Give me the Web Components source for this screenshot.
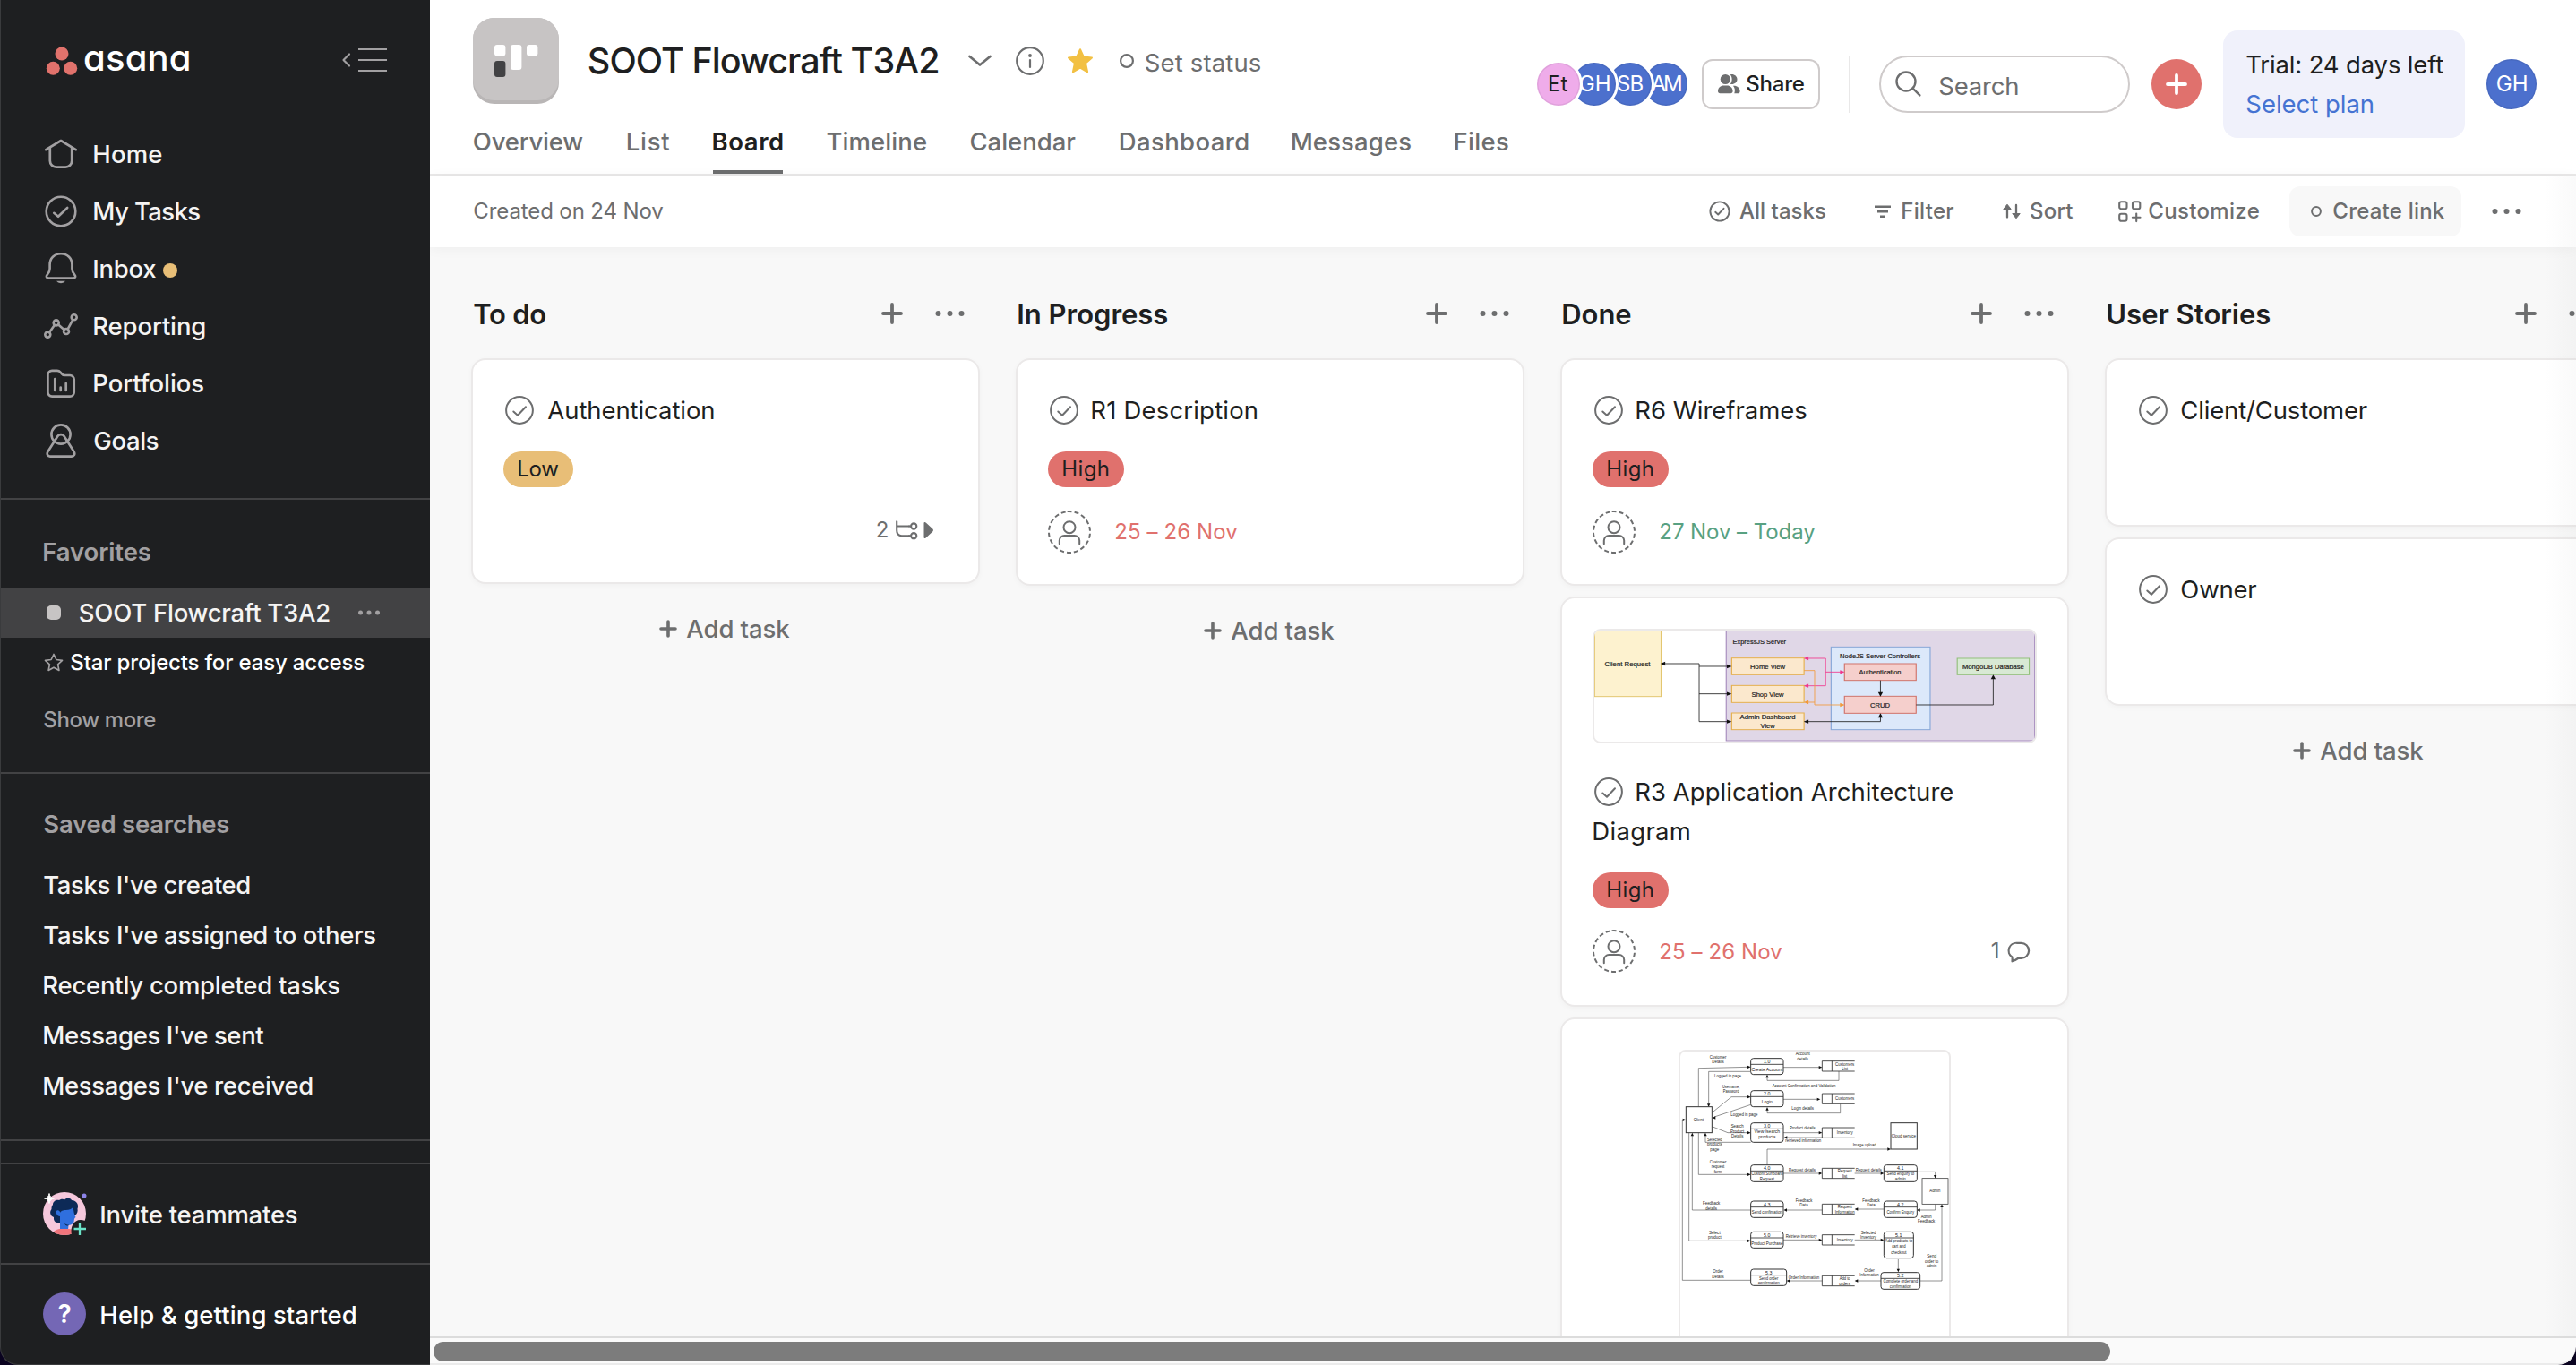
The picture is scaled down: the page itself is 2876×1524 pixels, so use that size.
<!DOCTYPE html>
<html lang="en">
<head>
<meta charset="utf-8">
<title>SOOT Flowcraft T3A2</title>
<style>
html,body{margin:0;padding:0;height:1524px;overflow:hidden;background:#0a0320;font-family:Inter,"Open Sans",sans-serif}
</style>
</head>
<body>
<asana-app></asana-app>
<script>
const define=(name,html,init)=>customElements.define(name,class extends HTMLElement{
  constructor(){super();this.attachShadow({mode:'open'}).innerHTML=typeof html==='function'?html(this):html;}
  connectedCallback(){init&&init(this);}
});

/* ---------- icons ---------- */
const S='fill="none" stroke="currentColor" stroke-linecap="round" stroke-linejoin="round"';
const ICONS={
 home:[40,40,`<g ${S} stroke-width="2.7"><path d="M3.3 15.2 20 5l16.7 10.2"/><path d="M7.8 13v14.6a7 7 0 0 0 7 7h10.4a7 7 0 0 0 7-7V13"/></g>`],
 tasks:[40,40,`<g ${S} stroke-width="2.6"><circle cx="20" cy="20" r="16.3"/><path d="M12.2 21.8l4.8 4L27.2 16"/></g>`],
 bell:[40,40,`<path ${S} stroke-width="2.6" d="M20 3.3C12.500 3.300 7.600 8.500 7.600 15.500V20c0 3-1.300 5-3 6.800C3 28.500 4 30.600 6 30.600H34c2 0 3-2.100 1.400-3.800-1.700-1.800-3-3.800-3-6.800V15.500C32.400 8.500 27.500 3.300 20 3.300Z"/><path fill="currentColor" d="M15 33.800h10a5.500 4 0 0 1-10 0z"/>`],
 report:[40,40,`<g ${S} stroke-width="2.6"><circle cx="5.300" cy="29.600" r="3"/><circle cx="14.700" cy="16.400" r="3"/><circle cx="26" cy="26" r="3"/><circle cx="34.700" cy="10.300" r="3"/><path d="M7.200 27l5.600-8M17.200 18.500l6.300 5.400M27.700 23.300l5.400-10"/></g>`],
 folder:[40,40,`<g ${S} stroke-width="2.700"><path d="M5.400 10.500a4.700 4.700 0 0 1 4.700-4.700h5.700c1.600 0 2.600.5 3.600 1.700l1.500 1.800c1 1.200 2 1.700 3.600 1.700h5.500a4.700 4.700 0 0 1 4.700 4.700v14.300a4.700 4.700 0 0 1-4.700 4.700H10.100a4.700 4.700 0 0 1-4.700-4.700z"/><path d="M13.300 15v13M19.700 24.500V28M25.700 20V28"/></g>`],
 goals:[40,40,`<g ${S} stroke-width="2.600"><circle cx="20" cy="13" r="10.600"/><path d="M16.400 15C18 12.500 22 12.500 23.600 15L34.600 32.300C36.200 34.800 34.800 37.600 32 37.600H8C5.200 37.600 3.800 34.800 5.400 32.300Z"/></g>`],
 collapse:[50,28,`<path ${S} stroke-width="2.200" d="M8 7.500L1.500 14 8 20.500"/><path d="M18 1h32v2H18zM18 13h32v2H18zM18 25h32v2H18z" fill="currentColor"/>`],
 staroutline:[22,22,`<path ${S} stroke-width="1.700" d="M11 1.500l2.900 6 6.600.8-4.900 4.500 1.300 6.600L11 16.200l-5.900 3.200 1.300-6.600L1.500 8.300l6.600-.8z"/>`],
 star:[30,28,`<path fill="#f2c043" stroke="#f2c043" stroke-width="2" stroke-linejoin="round" d="M15 1.200l3.800 8.300 9.200 1-6.900 6.100 2 9.700L15 21.700l-8.100 4.600 2-9.700L2 10.500l9.200-1z"/>`],
 chevron:[28,16,`<path ${S} stroke-width="2.800" d="M2.500 3l11.500 9.500L25.500 3"/>`],
 info:[32,32,`<g ${S} stroke-width="2.200"><circle cx="16" cy="16" r="14.800"/><path d="M16 15v8"/></g><circle cx="16" cy="10" r="1.900" fill="currentColor"/>`],
 ring16:[16,16,`<circle cx="8" cy="8" r="6.900" ${S} stroke-width="2.200"/>`],
 ring12:[12,12,`<circle cx="6" cy="6" r="4.900" ${S} stroke-width="2"/>`],
 share:[25,22,`<g fill="currentColor"><circle cx="8.300" cy="5.500" r="5.600"/><path d="M0 18.800c0-4 3-6.300 6.300-6.300h4c3.300 0 6.300 2.300 6.300 6.300 0 1.400-.9 2.400-2.400 2.400H2.400C.9 21.200 0 20.200 0 18.800z"/><path d="M13.800.3c4-1 7.700 1.600 7.700 5.300s-3.700 6.300-7.700 5.300c2.500-3 2.500-7.600 0-10.600z"/><path d="M17 12.700h1c3.700 0 6.600 2.400 6.600 6.200 0 1.400-.9 2.300-2.300 2.300h-4c1-3 .8-6.100-1.300-8.500z"/></g>`],
 search:[30,30,`<g ${S} stroke-width="2.400"><circle cx="12" cy="12" r="10.500"/><path d="M19.800 19.800l7.600 7.600"/></g>`],
 plus24:[24,24,`<path ${S} stroke-width="3.800" d="M12 2v20M2 12h20"/>`],
 plus20:[20,20,`<path ${S} stroke-width="3.600" d="M10 2v16M2 10h16"/>`],
 check24:[24,24,`<g ${S} stroke-width="1.900"><circle cx="12" cy="12" r="10.600"/><path d="M7.200 12.800l3 2.700 6.300-6.700"/></g>`],
 check:[32,32,`<g ${S} stroke-width="2"><circle cx="16" cy="16" r="14.900"/><path d="M9.300 17.500l4.700 4.300L23 12.200"/></g>`],
 filter:[18,16,`<path fill="currentColor" d="M0 1.500h18v2.400H0zM3 7h12v2.400H3zM6 12.500h6v2.400H6z"/>`],
 sort:[20,18,`<path ${S} stroke-width="2.300" d="M5 15.500V4M15 2v11"/><path fill="currentColor" stroke="currentColor" stroke-width="1" stroke-linejoin="round" d="M.8 6.500L5 1.200l4.200 5.300zM10.800 11.500L15 16.800l4.200-5.300z"/>`],
 customize:[26,24,`<g ${S} stroke-width="2.100"><rect x="1.200" y="1.200" width="8.300" height="8" rx="2"/><rect x="16" y="1.200" width="8.300" height="8" rx="2"/><rect x="1.200" y="14.800" width="8.300" height="8" rx="2"/><path d="M20.200 14.500v8.600M15.900 18.800h8.600"/></g>`],
 dots:[33,8,`<g fill="currentColor"><circle cx="3.500" cy="4" r="3"/><circle cx="16.500" cy="4" r="3"/><circle cx="29.500" cy="4" r="3"/></g>`],
 dotssm:[24,6,`<g fill="currentColor"><circle cx="2.500" cy="3" r="2.500"/><circle cx="12" cy="3" r="2.500"/><circle cx="21.500" cy="3" r="2.500"/></g>`],
 subtask:[25,22,`<g ${S} stroke-width="2.100"><path d="M1.200 1.200V11c0 4 2 6.200 5.500 6.200H15M1.200 6.500H15"/><circle cx="20.200" cy="6.500" r="3.100"/><circle cx="20.200" cy="17.200" r="3.100"/><path d="M15 6.500h2M15 17.200h2"/></g>`],
 tri:[12,20,`<path fill="currentColor" d="M.5 2.200C.5.800 1.700.500 2.700 1.500l7.600 7c.9.900.9 2 0 2.900l-7.600 7c-1 1-2.200.700-2.200-.7z"/>`],
 comment:[25,24,`<path ${S} stroke-width="2.200" d="M10 1.800h4.500a8.600 8.600 0 0 1 0 17.200h-3.500c-2 1.500-4 2.700-6.500 3.300.3-1.800.2-3.300-.1-4.800A8.600 8.600 0 0 1 10 1.800z"/>`],
 person:[48,48,`<g ${S} stroke-width="2"><circle cx="24" cy="24" r="23" stroke-dasharray="5 3.030" stroke-linecap="butt" transform="rotate(-96 24 24)"/><circle cx="24" cy="18.700" r="6.500"/><path d="M12.800 37.200v-3.700a5.500 5.500 0 0 1 5.500-5.500h11.400a5.500 5.500 0 0 1 5.500 5.500v3.700"/></g>`],
 board:[96,96,`<rect width="96" height="96" rx="24" fill="#b9b6b6"/><path d="M0 24A24 24 0 0 1 24 0H72A24 24 0 0 1 96 24V68A24 24 0 0 1 72 92H24A24 24 0 0 1 0 68Z" fill="#c7c4c4"/><g fill="#fff"><rect x="24" y="30" width="12.400" height="12.400" rx="3"/><rect x="42" y="30" width="12.400" height="28" rx="3"/><rect x="60" y="30" width="12.400" height="12.400" rx="3"/></g><rect x="24" y="48" width="12.400" height="18" rx="3" fill="#424244"/>`],
 invite:[50,48,`<defs><clipPath id="c"><circle cx="24" cy="24" r="24"/></clipPath></defs><g clip-path="url(#c)"><rect width="48" height="48" fill="#f6c8dc"/><path d="M11 14c0-4 4-6 7-5 2-1.500 5-1.500 6-.5 2-2.500 7-2 8 .5 4 0 7 3 7 6.500 0 1 0 2-.5 3 .7 3-.5 6-2.500 7L19 34c-5 1-7.500-2-7-6-4-1.500-5-6-2.500-9 0-2 .3-4 1.500-5z" fill="#0d2a57"/><path d="M19 27c-3.500 0-5.500-5-3.500-6.500 2-1 3.500.8 4 2.500 0-2 3-3 6-3 4 0 6-1 8-3 1 4 1 8 3 11-2 1-1.500 3-2 5s-2 3.500-6 4l-.5 5H19z" fill="#2f6fde"/><path d="M24 34.500c1 1.500 2.500 2 5 2l-1 1c-2 0-3.500-.5-4-3z" fill="#0d2a57"/><path d="M11 48c0-5 4-7 9-7h9c4 0 6 3 6 7z" fill="#f0757c"/></g><path d="M32 48c-2-9 2-17 10-17 3 0 6 1 8 3v14z" fill="#1e1f21"/><path d="M41 34.500V48M34.500 41H48" stroke="#6be3c8" stroke-width="2.300"/><path d="M7 1.500Q7.800 6.500 12.500 7 7.800 7.500 7 12.500 6.200 7.500 1.500 7 6.200 6.500 7 1.500z" fill="#fff" stroke="#fff"/><circle cx="46" cy="4" r="2.500" fill="#8d84e8"/>`],
 logo:[36,32,`<g fill="#e1726c"><circle cx="18" cy="8" r="7.500"/><circle cx="8.300" cy="24.200" r="7.500"/><circle cx="27.700" cy="24.200" r="7.500"/></g>`]
};
define('ui-icon',el=>{const [w,h,b]=ICONS[el.getAttribute('name')];
  return `<style>:host{display:block;flex:none;width:${w}px;height:${h}px}svg{display:block;overflow:visible}</style><svg width="${w}" height="${h}" viewBox="0 0 ${w} ${h}">${b}</svg>`});

/* ---------- sidebar ---------- */
define('nav-item',el=>`<style>:host{display:flex;align-items:center;height:64px;padding-left:48px;color:#a2a0a2}
.t{display:flex;align-items:center;gap:8px;margin-left:17px;color:#f5f4f3}</style><ui-icon name="${el.getAttribute('icon')}"></ui-icon><div class="t"><slot></slot></div>`);
define('side-link',`<style>:host{display:flex;align-items:center;height:56px;padding-left:49px;color:#f5f4f3}</style><slot></slot>`);
define('side-bar',`<style>
:host{display:flex;flex-direction:column;flex:none;width:480px;height:1524px;box-sizing:border-box;background:#1e1f21;border-left:1px solid #3a3b3d;border-bottom:1px solid #3a3b3d;border-radius:0 0 0 20px;overflow:hidden;font-size:27.500px;font-weight:500;color:#f5f4f3}
.in{margin-left:-1px;display:flex;flex-direction:column}
.top{height:140px;display:flex;align-items:flex-start}
.word{font-size:40px;line-height:40px;font-weight:500;color:#fff;font-feature-settings:"cv11";letter-spacing:.2px;margin:44.500px 0 0 6px;width:119px}
.line{height:2px;background:#424244}
.h{color:#a2a0a2;font-weight:600;padding-left:49px;display:flex;align-items:center}
.cur{display:flex;align-items:center;height:56px;background:#424244;padding-left:52px}
.sq{width:16px;height:16px;border-radius:5px;background:#c7c4c4;margin-right:20.500px}
.star{display:flex;align-items:center;height:55px;padding-left:49px;gap:8px;font-size:24px;color:#fff}
.star fit-text{padding-top:2px}
.more{display:flex;align-items:center;height:74px;padding-left:49px;font-size:24px;color:#a2a0a2}
.foot{display:flex;align-items:center;height:110px;padding-left:48px}
.foot fit-text{padding-top:2px}
.q{width:48px;height:48px;border-radius:50%;background:#7467b5;color:#fff;display:flex;align-items:center;justify-content:center;font-size:28px;font-weight:600;margin-right:17px}
</style><div class="in">
<div class="top"><ui-icon name="logo" style="margin:52px 0 0 51px"></ui-icon><div class="word">asana</div><ui-icon name="collapse" style="margin:53px 0 0 170px;color:#a2a0a2"></ui-icon></div>
<nav-item icon="home"><fit-text w="75">Home</fit-text></nav-item>
<nav-item icon="tasks"><fit-text w="118">My Tasks</fit-text></nav-item>
<nav-item icon="bell"><fit-text w="69">Inbox</fit-text><span style="width:16px;height:16px;border-radius:50%;background:#e8be77;margin-top:4px"></span></nav-item>
<nav-item icon="report"><fit-text w="124">Reporting</fit-text></nav-item>
<nav-item icon="folder"><fit-text w="122">Portfolios</fit-text></nav-item>
<nav-item icon="goals"><fit-text w="71.500">Goals</fit-text></nav-item>
<div class="line" style="margin-top:32px"></div>
<div class="h" style="height:98px;box-sizing:border-box;padding-top:19px"><fit-text w="118.500">Favorites</fit-text></div>
<div class="cur"><span class="sq"></span><fit-text w="279.500">SOOT Flowcraft T3A2</fit-text><ui-icon name="dotssm" style="margin-left:32px;color:#a2a0a2"></ui-icon></div>
<div class="star"><ui-icon name="staroutline" style="color:#a2a0a2"></ui-icon><fit-text w="327">Star projects for easy access</fit-text></div>
<div class="more"><fit-text w="124">Show more</fit-text></div>
<div class="line" style="margin-top:21px"></div>
<div class="h" style="height:96px;box-sizing:border-box;padding-top:16px"><fit-text w="206">Saved searches</fit-text></div>
<side-link><fit-text w="229">Tasks I've created</fit-text></side-link>
<side-link><fit-text w="370">Tasks I've assigned to others</fit-text></side-link>
<side-link><fit-text w="330">Recently completed tasks</fit-text></side-link>
<side-link><fit-text w="245">Messages I've sent</fit-text></side-link>
<side-link><fit-text w="299">Messages I've received</fit-text></side-link>
<div class="line" style="margin-top:32px"></div>
<div class="line" style="margin-top:24px"></div>
<div class="foot"><ui-icon name="invite"></ui-icon><fit-text w="218.500" style="margin-left:15px">Invite teammates</fit-text></div>
<div class="line"></div>
<div class="foot"><span class="q">?</span><fit-text w="283.500" style="color:#fff">Help &amp; getting started</fit-text></div>
</div>`);

/* ---------- header ---------- */
define('user-avatar',el=>{const s=el.getAttribute('size')||48;
 return `<style>:host{display:flex;align-items:center;justify-content:center;flex:none;width:${s}px;height:${s}px;border-radius:50%;position:relative;box-sizing:border-box;background:#4c70cd;color:#fff;font-size:24px;font-weight:400;box-shadow:inset 0 0 0 1.500px rgba(0,0,0,.06)}
:host([stacked]){box-shadow:0 0 0 3px #fff,inset 0 0 0 1.500px rgba(0,0,0,.06)}:host([pink]){background:#efacea;color:#1e1f21}</style><slot></slot>`});
define('page-tab',`<style>:host{display:flex;align-items:center;height:72px;box-sizing:border-box;color:#6d6e6f;font-size:27.500px;font-weight:500;border-bottom:4px solid transparent;padding-top:4px}:host([active]){color:#1e1f21;border-color:#6d6e6f;font-weight:600}</style><slot></slot>`);
define('project-header',`<style>
:host{display:flex;align-items:flex-start;height:196px;box-sizing:border-box;border-bottom:2px solid #e9e8e8;background:#fff;padding:0 44px 0 48px;color:#6d6e6f}
.l{display:flex;flex-direction:column}
.row{display:flex;align-items:center;height:96px;padding-top:20px}
.title{font-size:39.500px;font-weight:500;color:#1e1f21;margin-left:33.500px;padding-top:2px}
.tabs{display:flex;gap:49.400px;margin-top:6px;padding-left:.5px}
.r{display:flex;align-items:center;height:120px;margin:34px 0 0 auto}
.av{display:flex}.av>*+*{margin-left:-8px}
.share{display:flex;align-items:center;width:132px;height:56px;box-sizing:border-box;border:2px solid #cfcbcb;border-radius:12px;margin-left:16px;padding-left:16px;font-size:24px;font-weight:500}
.share fit-text{margin-left:7px;color:#1e1f21}
.vl{width:2px;height:64px;background:#e9e8e8;margin:0 32px}
.search{display:flex;align-items:center;width:280px;height:64px;box-sizing:border-box;border:2px solid #cfcbcb;border-radius:32px;padding-left:16px;font-size:27.500px}
.add{width:56px;height:56px;border-radius:50%;background:#e0716d;color:#fff;display:flex;align-items:center;justify-content:center;margin:0 24px}
.trial{display:flex;flex-direction:column;justify-content:center;gap:0;width:270px;height:120px;box-sizing:border-box;border-radius:16px;background:#f0f1fb;padding-left:26px;margin-right:24px;font-size:27.500px;color:#1e1f21}
.trial div{height:44px;display:flex;align-items:center}
</style>
<div class="l"><div class="row"><ui-icon name="board"></ui-icon><fit-text class="title" w="389.500">SOOT Flowcraft T3A2</fit-text>
<ui-icon name="chevron" style="margin-left:33px"></ui-icon><ui-icon name="info" style="margin-left:26px"></ui-icon><ui-icon name="star" style="margin-left:25px"></ui-icon><ui-icon name="ring16" style="margin-left:29px"></ui-icon><fit-text w="129" style="font-size:27.500px;margin:4px 0 0 12.500px">Set status</fit-text></div>
<div class="tabs"><page-tab><fit-text w="122.500">Overview</fit-text></page-tab><page-tab><fit-text w="46.500">List</fit-text></page-tab><page-tab active><fit-text w="77.500">Board</fit-text></page-tab><page-tab><fit-text w="110.500">Timeline</fit-text></page-tab><page-tab><fit-text w="118">Calendar</fit-text></page-tab><page-tab><fit-text w="142.500">Dashboard</fit-text></page-tab><page-tab><fit-text w="132.500">Messages</fit-text></page-tab><page-tab><fit-text w="59.500">Files</fit-text></page-tab></div></div>
<div class="r"><div class="av"><user-avatar stacked pink style="z-index:4"><fit-text w="20.500">Et</fit-text></user-avatar><user-avatar stacked style="z-index:3"><fit-text w="33">GH</fit-text></user-avatar><user-avatar stacked style="z-index:2"><fit-text w="28.500">SB</fit-text></user-avatar><user-avatar style="z-index:1"><fit-text w="33.500">AM</fit-text></user-avatar></div>
<div class="share"><ui-icon name="share"></ui-icon><fit-text w="63.500">Share</fit-text></div>
<div class="vl"></div>
<div class="search"><ui-icon name="search"></ui-icon><fit-text w="88" style="margin:4px 0 0 19px">Search</fit-text></div>
<div class="add"><ui-icon name="plus24"></ui-icon></div>
<div class="trial"><div><fit-text w="220">Trial: 24 days left</fit-text></div><div><fit-text w="141.500" style="color:#4573d2">Select plan</fit-text></div></div>
<user-avatar size="56"><fit-text w="33">GH</fit-text></user-avatar></div>`);

define('tool-button',el=>`<style>:host{display:flex;align-items:center;height:56px;font-weight:500}slot{display:block;margin-left:${el.getAttribute('gap')}px}</style><ui-icon name="${el.getAttribute('icon')}"></ui-icon><slot></slot>`);
define('tool-bar',`<style>:host{display:flex;align-items:center;flex:none;height:80px;background:#fff;padding:0 61px 0 49px;color:#6d6e6f;font-size:24px;box-shadow:0 2px 14px rgba(30,31,33,.045);position:relative}
.sp{flex:1}.link{width:192px;box-sizing:border-box;padding-left:24px;border-radius:12px;background:#f8f8f8}</style>
<fit-text w="211">Created on 24 Nov</fit-text><span class="sp"></span>
<tool-button icon="check24" gap="9.600"><fit-text w="96">All tasks</fit-text></tool-button>
<tool-button icon="filter" gap="12" style="margin-left:55.400px"><fit-text w="58">Filter</fit-text></tool-button>
<tool-button icon="sort" gap="10.600" style="margin-left:55px"><fit-text w="47.400">Sort</fit-text></tool-button>
<tool-button icon="customize" gap="8" style="margin-left:51px"><fit-text w="122.300">Customize</fit-text></tool-button>
<tool-button class="link" icon="ring12" gap="13" style="margin-left:34.700px"><fit-text w="124.500">Create link</fit-text></tool-button>
<ui-icon name="dots" style="margin-left:34px"></ui-icon>`);

/* ---------- board ---------- */
define('priority-pill',`<style>:host{display:flex;align-items:center;width:max-content;height:40px;padding:0 17px;border-radius:20px;background:#e0716d;color:#1e1f21;font-size:24px}:host([low]){background:#e8be77}</style><slot></slot>`);
define('task-card',`<style>:host{display:block;box-sizing:border-box;width:568px;flex:none;background:#fff;border:2px solid #ebe9e9;border-radius:16px;padding:34px;box-shadow:0 2px 6px rgba(30,31,33,.03);color:#1e1f21;font-size:27.500px}
.t{display:flex;align-items:center;height:44px;padding-left:2px;gap:15px}.t ui-icon{color:#6d6e6f}
::slotted([slot=line2]){line-height:44px;margin-left:1px}
::slotted([slot=tag]){margin-top:24px}
::slotted([slot=foot]){display:flex;align-items:center;height:48px;margin-top:26px;font-size:24px;color:#6d6e6f}
:host([bare]) .t{display:none}
</style><slot name="media"></slot><div class="t"><ui-icon name="check"></ui-icon><slot name="title"></slot></div><slot name="line2"></slot><slot name="tag"></slot><slot name="foot"></slot>`);
define('board-column',`<style>:host{display:flex;flex-direction:column;flex:none;width:568px}
.h{display:flex;align-items:center;flex:none;height:124px;box-sizing:border-box;padding:26px 16px 2px 3px;color:#6d6e6f}
.h .n{font-size:31px;font-weight:600;color:#1e1f21;display:block;padding-top:2px}
.cards{display:flex;flex-direction:column;gap:12px}
.add{display:flex;align-items:center;gap:10px;height:100px;padding-left:210px;color:#6d6e6f;font-size:27.500px;font-weight:500}
:host([long]) .add{display:none}
</style><div class="h"><slot name="name" class="n"></slot><ui-icon name="plus24" style="margin-left:auto"></ui-icon><ui-icon name="dots" style="margin-left:36px;margin-right:1px"></ui-icon></div><div class="cards"><slot></slot></div><div class="add"><ui-icon name="plus20"></ui-icon><fit-text w="116">Add task</fit-text></div>`);

/* Diagram helpers: r = box, p = polyline, a = arrow head, t = label */
const r=(x,y,X,Y,f,s,w=2,k=0)=>`<rect x="${x}" y="${y}" width="${X-x}" height="${Y-y}" rx="${k}" fill="${f}" stroke="${s}" stroke-width="${w}"/>`;
const p=(pts,s='#333',w=1.6)=>`<polyline points="${pts}" fill="none" stroke="${s}" stroke-width="${w}"/>`;
const a=(x,y,d,c='#111',l=11,h=5)=>`<path fill="${c}" d="M${x} ${y}${{r:`l${-l} ${-h}v${2*h}z`,l:`l${l} ${-h}v${2*h}z`,u:`l${-h} ${l}h${2*h}z`,d:`l${-h} ${-l}h${2*h}z`}[d]}"/>`;
const t=(x,y,s,w,f,c='#222',k='middle')=>`<text x="${x}" y="${y}" text-anchor="${k}" font-size="${f}" fill="${c}" ${w?`textLength="${w}" lengthAdjust="spacingAndGlyphs"`:''}>${s}</text>`;

define('architecture-diagram',()=>{
 const pk='#f0388c',or='#f29a3c',H=6.5,L=14;
 return `<style>:host{display:block;width:496px;height:128px;box-sizing:border-box;border:2px solid #ebe9e9;border-radius:9px;overflow:hidden;margin-bottom:32px}svg{display:block;font-family:"Liberation Sans",sans-serif}</style>
<svg width="492" height="124" viewBox="2 2 492 124"><g transform="scale(.3827 .33333) translate(-126 -126)">
${r(132,133,326,353,'#fdf2cf','#e3c670',3)}${r(516,132,1416,501,'#e0d7e7','#a68bbd',3)}${r(822,187,1111,464,'#dce8fa','#86a8d8',3)}
${r(532,224,743,280,'#fbe8cd','#e5b04e',3)}${r(532,316,743,373,'#fbe8cd','#e5b04e',3)}${r(532,408,743,464,'#fbe8cd','#e5b04e',3)}
${r(861,243,1070,299,'#f5cfcc','#d0736b',3)}${r(861,352,1070,409,'#f5cfcc','#d0736b',3)}${r(1190,225,1400,280,'#d8e9d4','#93c07c',3)}
${p('332,243 437,243 437,437 525,437','#222',2.4)}${p('437,252 525,252','#222',2.4)}${p('437,344 525,344','#222',2.4)}
${a(324,243,'l','#111',L,H)}${a(532,252,'r','#111',L,H)}${a(532,344,'r','#111',L,H)}${a(532,437,'r','#111',L,H)}
${p('752,225 806,225 806,317 752,317',pk,2.4)}${p('806,271 852,271',pk,2.4)}${a(742,225,'l',pk,L,H)}${a(742,317,'l',pk,L,H)}${a(862,271,'r',pk,L,H)}
${p('743,266 774,266 774,381 852,381',or,2.4)}${p('774,372 752,372',or,2.4)}${a(742,372,'l',or,L,H)}${a(862,381,'r',or,L,H)}
${p('966,299 966,345','#222',2.4)}${a(966,353,'d','#111',15,7)}${p('752,437 966,437 966,418','#222',2.4)}${a(742,437,'l','#111',L,H)}${a(966,409,'u','#111',15,7)}
${p('1070,381 1295,381 1295,290','#222',2.4)}${a(1295,280,'u','#111',15,7)}</g>
<g stroke="#222" stroke-width=".2">${t(39,41.900,'Client Request',51,7.3)}${t(156.500,17.300,'ExpressJS Server',59.500,7.3,'#222','start')}${t(195.600,44.900,'Home View',39,7.3)}${t(195.600,75.600,'Shop View',36,7.3)}${t(195.600,101.300,'Admin Dashboard',62,7.3)}${t(195.600,110.600,'View',16,7.3)}
${t(321,32.600,'NodeJS Server Controllers',90,7.3)}${t(321,51.100,'Authentication',47,7.3)}${t(321,87.900,'CRUD',22,7.3)}${t(447.400,44.900,'MongoDB Database',69,7.3)}</g></svg>`});

define('dataflow-diagram',()=>{
 const F=13.5;
 const proc=(x,y,X,Y,n,lines,lh=18)=>r(x,y,X,Y,'#fff','#333',3,9)+p(`${x},${y+20} ${X},${y+20}`,'#333',2.600)+t((x+X)/2,y+17,n,0,16)+lines.map((s,i)=>t((x+X)/2,y+(lines.length>1?35:43)+i*lh,s[0],s[1],F+.5)).join('');
 const store=(y,lines)=>p(`663,${y} 554,${y} 554,${y+34} 663,${y+34}`,'#333',2.6)+p(`587,${y} 587,${y+34}`,'#333',2.6)+lines.map((s,i)=>t(630,y+(lines.length>1?15+i*16:21),s[0],s[1],F)).join('');
 const lab=(x,y,...ls)=>ls.map((s,i)=>t(x,y+5+i*16,s[0],s[1],F)).join('');
 return `<style>:host{display:block;width:304px;height:420px;box-sizing:border-box;border:2px solid #ebe9e9;border-radius:8px;overflow:hidden;margin:0 auto}svg{display:block;font-family:"Liberation Sans",sans-serif}</style>
<svg width="300" height="320" viewBox="79 42 900 960">
${p('140,227 140,98 305,94')}${a(315,94,'r')}${p('315,109 174,109 174,218')}${a(174,228,'d')}
${p('424,95 545,95')}${a(554,95,'r')}${p('610,108 610,139 370,139 370,128')}${a(370,119,'u')}
${p('185,247 250,194 305,194')}${a(315,194,'r')}${p('315,220 193,261')}${a(186,264,'l')}${p('424,202 540,202')}${a(548,202,'r')}
${p('615,218 615,248 370,248 370,237')}${a(370,228,'u')}
${p('185,293 238,314 305,314')}${a(315,314,'r')}${p('424,314 545,314')}${a(554,314,'r')}${p('554,330 436,330')}${a(426,330,'l')}
${p('315,346 163,346 163,322')}${a(163,314,'u')}${p('370,422 370,369 776,369')}${a(784,369,'r')}
${p('140,314 140,454 305,454')}${a(315,454,'r')}${p('424,450 545,450')}${a(554,450,'r')}${p('663,450 752,450')}${a(761,450,'r')}
${p('872,445 933,445 933,457')}${a(933,467,'d')}${p('933,553 933,573 880,573')}${a(871,573,'l')}
${p('761,570 672,570')}${a(663,570,'l')}${p('554,573 434,573')}${a(425,573,'l')}${p('315,573 119,573 119,322')}${a(119,314,'u')}
${p('108,314 108,676 305,676')}${a(315,676,'r')}${p('424,673 545,673')}${a(554,673,'r')}${p('663,673 752,673')}${a(761,673,'r')}
${p('809,738 809,772')}${a(809,781,'d')}${p('882,810 955,810 955,562')}${a(955,553,'u')}
${p('751,810 672,810')}${a(663,810,'l')}${p('554,810 444,810')}${a(435,810,'l')}${p('315,808 86,808 86,271 90,271')}${a(98,271,'r')}
${r(98,227,185,314,'#fff','#333',3)}${t(140,275,'Client',34,F)}${r(784,281,872,369,'#fff','#333',3)}${t(827,330,'Cloud service',82,F)}${r(889,467,976,553,'#fff','#333',2.200)}${t(932,514,'Admin',36,F)}
${proc(315,65,424,119,'1.0',[['Create Account',104]])}${proc(315,173,424,227,'2.0',[['Login',36]])}${proc(315,281,424,346,'3.0',[['View /search',86],['products',58]])}
${proc(315,422,424,478,'4.0',[['Custom Surfboard',106],['Request',48]],17)}${proc(761,422,872,478,'4.1',[['Send enquiry to',92],['admin',36]],18)}
${proc(315,543,424,598,'4.3',[['Send confimation',102]])}${proc(761,543,872,598,'4.2',[['Confirm Enquiry',92]])}
${proc(315,646,424,700,'5.0',[['Product Purchase',106]])}${proc(761,646,860,734,'5.1',[['Add products to',92],['cart and',46],['checkout',52]],19)}
${proc(315,771,435,826,'5.3',[['Send order',64],['confirmation',72]],17)}${proc(751,782,882,838,'5.2',[['Complete order and',116],['confirmation',72]],18)}
${store(74,[['Customers',64],['List',20]])}${store(183,[['Customers',64]])}${store(297,[['Inventory',54]])}${store(433,[['Request',48],['list',16]])}${store(553,[['Request',48],['Information',66]])}${store(656,[['Inventory',54]])}${store(793,[['Add to',36],['orders',38]])}
${lab(205,60,['Customer',56],['Details',40])}${lab(489,50,['Account',48],['details',38])}${lab(238,123,['Logged in page',90])}${lab(493,156,['Account Confirmation and Validation',212])}
${lab(249,160,['Username,',58],['Password',54])}${lab(293,254,['Logged in page',90])}${lab(489,232,['Login details',74])}${lab(270,293,['Search',42],['Product',46],['Details',40])}
${lab(488,297,['Product details',86])}${lab(491,341,['retrieved information',120])}${lab(194,337,['Selected',50],['products',50],['page',30])}${lab(696,355,['Image upload',78])}
${lab(205,412,['Customer',56],['request',44],['form',26])}${lab(487,439,['Request details',90])}${lab(710,439,['Request details',88])}
${lab(183,551,['Feedback',58],['details',38])}${lab(493,540,['Feedback',56],['Data',28])}${lab(718,540,['Feedback',58],['Data',28])}${lab(903,594,['Admin',36],['Feedback',58])}
${lab(194,649,['Select',38],['product',44])}${lab(484,660,['Retrieve inventory',104])}${lab(709,649,['Selected',50],['Inventory',54])}${lab(921,728,['Send',32],['order to',46],['admin',34])}
${lab(205,779,['Order',34],['Details',40])}${lab(493,798,['Order Information',104])}${lab(712,774,['Order',34],['Information',64])}
</svg>`});

define('scroll-bar',`<style>:host{display:flex;align-items:flex-start;flex:none;height:32px;box-sizing:border-box;border-top:2px solid #dcdcdc;border-bottom:2px solid #ebebeb;background:#fafafa;padding:4px 0 0 4px;border-radius:0 0 20px 0}
i{display:block;width:1872px;height:22px;border-radius:11px;background:#7c7c7c}</style><i></i>`);

define('task-board',`<style>:host{display:flex;flex:1;min-height:0;gap:40px;padding-left:46px;background:#f8f8f8;overflow:hidden}</style>
<board-column><fit-text slot="name" w="80">To do</fit-text>
 <task-card style="height:252px"><fit-text slot="title" w="186">Authentication</fit-text><priority-pill slot="tag" low><fit-text w="44">Low</fit-text></priority-pill>
 <div slot="foot" style="margin-top:24px;justify-content:flex-end;padding-right:15.500px"><fit-text w="12.500">2</fit-text><ui-icon name="subtask" style="margin-left:8.500px"></ui-icon><ui-icon name="tri" style="margin-left:6px"></ui-icon></div></task-card></board-column>
<board-column><fit-text slot="name" w="166">In Progress</fit-text>
 <task-card style="height:254px"><fit-text slot="title" w="184.500">R1 Description</fit-text><priority-pill slot="tag"><fit-text w="50.500">High</fit-text></priority-pill>
 <div slot="foot"><ui-icon name="person"></ui-icon><fit-text w="136" style="margin-left:27px;color:#e0716d">25 – 26 Nov</fit-text></div></task-card></board-column>
<board-column long><fit-text slot="name" w="76">Done</fit-text>
 <task-card style="height:254px"><fit-text slot="title" w="190">R6 Wireframes</fit-text><priority-pill slot="tag"><fit-text w="50.500">High</fit-text></priority-pill>
 <div slot="foot"><ui-icon name="person"></ui-icon><fit-text w="173" style="margin-left:27px;color:#58a182">27 Nov – Today</fit-text></div></task-card>
 <task-card style="height:458px"><architecture-diagram slot="media"></architecture-diagram><fit-text slot="title" w="353">R3 Application Architecture</fit-text><fit-text slot="line2" w="106.500">Diagram</fit-text><priority-pill slot="tag"><fit-text w="50.500">High</fit-text></priority-pill>
 <div slot="foot" style="margin-top:24px"><ui-icon name="person"></ui-icon><fit-text w="136" style="margin:2px 0 0 27px;color:#e0716d">25 – 26 Nov</fit-text><fit-text w="7.500" style="margin-left:auto">1</fit-text><ui-icon name="comment" style="margin:2px 7px 0 11px"></ui-icon></div></task-card>
 <task-card bare style="height:500px"><dataflow-diagram slot="media"></dataflow-diagram></task-card></board-column>
<board-column><fit-text slot="name" w="181">User Stories</fit-text>
 <task-card style="height:188px"><fit-text slot="title" w="207.500">Client/Customer</fit-text></task-card>
 <task-card style="height:188px"><fit-text slot="title" w="84">Owner</fit-text></task-card></board-column>`);

define('asana-app',`<style>:host{display:flex;width:2876px;height:1524px;overflow:hidden}
main{display:flex;flex-direction:column;flex:1;min-width:0;position:relative;border-radius:0 0 20px 0;overflow:hidden}
main::after{content:"";position:absolute;right:0;top:196px;bottom:32px;width:36px;background:linear-gradient(90deg,transparent,rgba(30,31,33,.025));pointer-events:none}</style>
<side-bar></side-bar><main><project-header></project-header><tool-bar></tool-bar><task-board></task-board><scroll-bar></scroll-bar></main>`);

/* A label whose box is its ink width: tracking is adjusted so the glyphs span exactly w pixels. */
const ctx=document.createElement('canvas').getContext('2d');
define('fit-text',`<style>:host{display:block;flex:none;white-space:nowrap;line-height:1.2}</style><slot></slot>`,el=>{
  const cs=getComputedStyle(el),s=el.textContent,w=+el.getAttribute('w');
  ctx.font=`${cs.fontWeight} ${cs.fontSize} ${cs.fontFamily}`;
  const m=ctx.measureText(s),ink=m.actualBoundingBoxLeft+m.actualBoundingBoxRight;
  el.style.width=w+'px';
  el.style.textIndent=(m.actualBoundingBoxLeft+.3)+'px';
  if(s.length>1)el.style.letterSpacing=((w-ink)/(s.length-1)).toFixed(3)+'px';
});
</script>
</body>
</html>
